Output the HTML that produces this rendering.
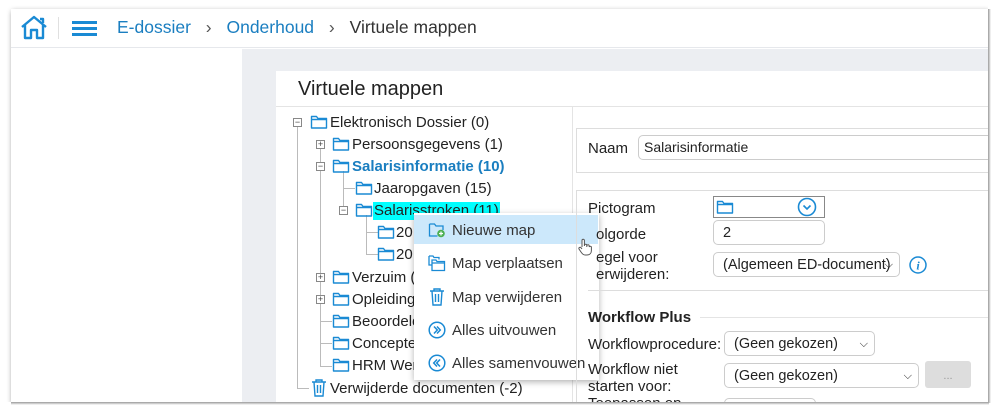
<!DOCTYPE html>
<html><head><meta charset="utf-8"><style>
*{box-sizing:border-box;margin:0;padding:0}
body{width:999px;height:413px;background:#fff;position:relative;overflow:hidden;font-family:"Liberation Sans",sans-serif;color:#222}
.abs{position:absolute}
.win{left:11px;top:9px;width:977px;height:393px;background:#fff;box-shadow:1px 2px 5px rgba(0,0,0,.45);overflow:hidden}
.t{position:absolute;white-space:nowrap;font-size:15px;line-height:18px;margin-top:1px}
.f{position:absolute;width:18px;height:15px}
.tog{position:absolute;width:9px;height:9px;border:1px solid #888;background:#fff;font-size:9px;line-height:7px;text-align:center;color:#444}
.vl{position:absolute;border-left:1px solid #bbb}
.hl{position:absolute;border-top:1px solid #bbb}
.mi{position:absolute;left:452px;font-size:15px;color:#333;white-space:nowrap;margin-top:1px}
.sel{position:absolute;border:1px solid #ccc;border-radius:5px;background:#fff;font-size:14.5px;padding-left:9px;line-height:24px;color:#222}
.lab{position:absolute;font-size:15px;white-space:nowrap;color:#222;margin-top:1px}
</style></head><body>
<svg width="0" height="0" style="position:absolute"><defs>
<symbol id="fo" viewBox="0 0 18 15"><path d="M1.5 2.5h5l1.5 2h8.5v9.5h-15z M1.5 5.5h15" fill="none" stroke="#1a8ad4" stroke-width="1.4" stroke-linejoin="round"/></symbol>
</defs></svg>
<div class="abs win">
 <div class="abs" style="left:0;top:0;width:977px;height:39px;border-bottom:1px solid #e6e8ec"></div>
 <svg class="abs" style="left:9px;top:5px" width="28" height="28" viewBox="0 0 28 28"><path d="M2 13L14 3l12 10 M5 11v13h6v-8h6v8h6V11 M20 5h3v4" fill="none" stroke="#1a8ad4" stroke-width="2.4" stroke-linejoin="round"/></svg>
 <div class="abs" style="left:47px;top:8px;height:22px;border-left:1px solid #e0e0e0"></div>
 <div class="abs" style="left:61px;top:12px;width:25px;height:3px;background:#1a8ad4;box-shadow:0 6px 0 #1a8ad4,0 12px 0 #1a8ad4"></div>
 <div class="abs" style="left:106px;top:8px;font-size:17.5px;white-space:nowrap;color:#1a7ec0">E-dossier <span style="color:#555;margin:0 10px">›</span> Onderhoud <span style="color:#555;margin:0 10px">›</span> <span style="color:#333">Virtuele mappen</span></div>
 <div class="abs" style="left:231px;top:40px;width:746px;height:353px;background:#eceef2"></div>
 <div class="abs" style="left:265px;top:62px;width:712px;height:331px;background:#fff"></div>
 <div class="abs" style="left:287px;top:69px;font-size:20px;color:#222">Virtuele mappen</div>
 <div class="abs" style="left:265px;top:97px;width:712px;border-top:1px solid #e4e4e4"></div>
 <div class="abs" style="left:561px;top:98px;height:295px;border-left:1px solid #e4e4e4"></div>
</div>
<div class="vl" style="left:297px;top:127px;height:261px"></div>
<div class="hl" style="left:297px;top:388px;width:12px"></div>
<div class="vl" style="left:320px;top:149px;height:217px"></div>
<div class="hl" style="left:320px;top:343px;width:12px"></div>
<div class="hl" style="left:320px;top:321px;width:12px"></div>
<div class="hl" style="left:320px;top:366px;width:12px"></div>
<div class="vl" style="left:343px;top:171px;height:40px"></div>
<div class="hl" style="left:343px;top:188px;width:12px"></div>
<div class="vl" style="left:366px;top:215px;height:40px"></div>
<div class="hl" style="left:366px;top:232px;width:12px"></div>
<div class="hl" style="left:366px;top:254px;width:12px"></div>

<div class="tog" style="left:293px;top:118px">−</div>
<svg class="f" style="left:310px;top:114px"><use href="#fo"/></svg>
<div class="t" style="left:330px;top:113px">Elektronisch Dossier (0)</div>
<div class="tog" style="left:316px;top:140px">+</div>
<svg class="f" style="left:332px;top:136px"><use href="#fo"/></svg>
<div class="t" style="left:352px;top:135px">Persoonsgegevens (1)</div>
<div class="tog" style="left:316px;top:162px">−</div>
<svg class="f" style="left:332px;top:158px"><use href="#fo"/></svg>
<div class="t" style="left:352px;top:157px;font-weight:bold;color:#1a7ec0">Salarisinformatie (10)</div>
<svg class="f" style="left:355px;top:180px"><use href="#fo"/></svg>
<div class="t" style="left:374px;top:179px">Jaaropgaven (15)</div>
<div class="tog" style="left:339px;top:206px">−</div>
<svg class="f" style="left:355px;top:202px"><use href="#fo"/></svg>
<div class="t" style="left:373px;top:201px;background:#00ffff;padding:0 1px">Salarisstroken (11)</div>
<svg class="f" style="left:377px;top:224px"><use href="#fo"/></svg>
<div class="t" style="left:396px;top:223px">20</div>
<svg class="f" style="left:377px;top:246px"><use href="#fo"/></svg>
<div class="t" style="left:396px;top:245px">20</div>
<div class="tog" style="left:316px;top:273px">+</div>
<svg class="f" style="left:332px;top:269px"><use href="#fo"/></svg>
<div class="t" style="left:352px;top:268px">Verzuim (</div>
<div class="tog" style="left:316px;top:295px">+</div>
<svg class="f" style="left:332px;top:291px"><use href="#fo"/></svg>
<div class="t" style="left:352px;top:290px">Opleiding</div>
<svg class="f" style="left:332px;top:313px"><use href="#fo"/></svg>
<div class="t" style="left:352px;top:312px">Beoordele</div>
<svg class="f" style="left:332px;top:335px"><use href="#fo"/></svg>
<div class="t" style="left:352px;top:334px">Concepte</div>
<svg class="f" style="left:332px;top:357px"><use href="#fo"/></svg>
<div class="t" style="left:352px;top:356px">HRM Wer</div>
<svg class="abs" style="left:311px;top:379px" width="16" height="18" viewBox="0 0 16 18"><path d="M1 3h14M5 3V1h6v2M3 3l1 14h8l1-14M6.5 6v8M9.5 6v8" fill="none" stroke="#1a8ad4" stroke-width="1.4"/></svg>
<div class="t" style="left:330px;top:379px">Verwijderde documenten (-2)</div>

<div class="abs" style="left:414px;top:213px;width:185px;height:167px;background:#fff;box-shadow:0 2px 6px rgba(0,0,0,.3)"></div>
<div class="abs" style="left:414px;top:215px;width:184px;height:29px;background:#cce8fb"></div>
<svg class="abs" style="left:428px;top:222px" width="18" height="16" viewBox="0 0 18 16"><path d="M1.5 2h5l1.5 2h7v4 M1.5 2v12h8" fill="none" stroke="#1a8ad4" stroke-width="1.3"/><circle cx="13" cy="11.5" r="3.8" fill="#4caf50"/><path d="M13 9.5v4M11 11.5h4" stroke="#fff" stroke-width="1.2"/></svg>
<div class="mi" style="top:221px">Nieuwe map</div>
<svg class="abs" style="left:428px;top:254px" width="18" height="18" viewBox="0 0 18 18"><path d="M1 2h4l1 1.5h5v2 M1 2v9h3 M4 6h4l1 1.5h7.5v9h-12.5z M4 9h12.5" fill="none" stroke="#1a8ad4" stroke-width="1.3"/></svg>
<div class="mi" style="top:254px">Map verplaatsen</div>
<svg class="abs" style="left:429px;top:288px" width="16" height="18" viewBox="0 0 16 18"><path d="M1 3h14M5 3V1h6v2M3 3l1 14h8l1-14M6.5 6v8M9.5 6v8" fill="none" stroke="#1a8ad4" stroke-width="1.4"/></svg>
<div class="mi" style="top:288px">Map verwijderen</div>
<svg class="abs" style="left:428px;top:321px" width="18" height="18" viewBox="0 0 18 18"><circle cx="9" cy="9" r="7.8" fill="none" stroke="#1a8ad4" stroke-width="1.5"/><path d="M6 5.5l3.3 3.5L6 12.5M9 5.5l3.3 3.5L9 12.5" fill="none" stroke="#1a8ad4" stroke-width="1.5"/></svg>
<div class="mi" style="top:321px">Alles uitvouwen</div>
<svg class="abs" style="left:428px;top:354px" width="18" height="18" viewBox="0 0 18 18"><circle cx="9" cy="9" r="7.8" fill="none" stroke="#1a8ad4" stroke-width="1.5"/><path d="M12 5.5L8.7 9l3.3 3.5M9 5.5L5.7 9 9 12.5" fill="none" stroke="#1a8ad4" stroke-width="1.5"/></svg>
<div class="mi" style="top:354px">Alles samenvouwen</div>
<svg class="abs" style="left:578px;top:238px" width="14" height="18" viewBox="0 0 14 18"><path d="M4 9V2.5a1.2 1.2 0 0 1 2.4 0V8 M6.4 7.5a1.2 1.2 0 0 1 2.4 0V9 M8.8 8a1.2 1.2 0 0 1 2.4 0v1 M11.2 9a1.2 1.2 0 0 1 2.2 0v3.5c0 2.5-1.5 4.5-4.5 4.5H7c-2 0-3-1.5-4-3L1 11a1.2 1.2 0 0 1 2-1.3L4 11" fill="#fff" stroke="#555" stroke-width="1"/></svg>

<div class="abs" style="left:576px;top:128px;width:420px;height:45px;border:1px solid #ddd"></div>
<div class="lab" style="left:588px;top:139px">Naam</div>
<div class="sel" style="left:638px;top:135px;width:360px;height:25px;padding-left:5px;font-size:14px;line-height:23px">Salarisinformatie</div>
<div class="abs" style="left:576px;top:190px;width:420px;height:220px;border-left:1px solid #ddd;border-top:1px solid #ddd"></div>
<div class="lab" style="left:588px;top:199px">Pictogram</div>
<div class="abs" style="left:713px;top:196px;width:112px;height:22px;border:1px solid #888"></div>
<svg class="f" style="left:716px;top:199px"><use href="#fo"/></svg>
<svg class="abs" style="left:797px;top:197px" width="20" height="20" viewBox="0 0 20 20"><circle cx="10" cy="10" r="8.5" fill="none" stroke="#1a8ad4" stroke-width="1.6"/><path d="M6.5 8.5L10 12l3.5-3.5" fill="none" stroke="#1a8ad4" stroke-width="1.6"/></svg>
<div class="lab" style="left:596px;top:225px">olgorde</div>
<div class="sel" style="left:713px;top:220px;width:112px;height:25px">2</div>
<div class="lab" style="left:596px;top:248px;line-height:17px">egel voor<br>erwijderen:</div>
<div class="sel" style="left:713px;top:252px;width:187px;height:25px">(Algemeen ED-document) <span style="position:absolute;right:6px;font-size:11px">⌵</span></div>
<svg class="abs" style="left:909px;top:256px" width="18" height="18" viewBox="0 0 18 18"><circle cx="9" cy="9" r="8" fill="none" stroke="#1a8ad4" stroke-width="1.5"/><text x="9" y="13.5" text-anchor="middle" font-family="Liberation Serif" font-style="italic" font-weight="bold" font-size="12" fill="#1a8ad4">i</text></svg>
<div class="abs" style="left:588px;top:290px;width:410px;border-top:1px solid #ddd"></div>
<div class="lab" style="left:588px;top:308px;font-weight:bold">Workflow Plus</div>
<div class="abs" style="left:700px;top:317px;width:298px;border-top:1px solid #e4e4e4"></div>
<div class="lab" style="left:588px;top:335px">Workflowprocedure:</div>
<div class="sel" style="left:724px;top:331px;width:151px;height:25px">(Geen gekozen) <span style="position:absolute;right:6px;font-size:11px">⌵</span></div>
<div class="lab" style="left:588px;top:360px;line-height:17px">Workflow niet<br>starten voor:</div>
<div class="sel" style="left:724px;top:363px;width:195px;height:25px">(Geen gekozen) <span style="position:absolute;right:6px;font-size:11px">⌵</span></div>
<div class="abs" style="left:925px;top:361px;width:46px;height:27px;background:#ddd;border-radius:3px;color:#999;font-size:11px;text-align:center;line-height:30px">...</div>
<div class="abs" style="left:724px;top:398px;width:92px;height:10px;border:1px solid #ccc;border-radius:5px"></div>
<div class="lab" style="left:588px;top:396px;line-height:14px;overflow:hidden;height:6px">Toepassen op</div>
<div class="abs" style="left:0;top:402px;width:999px;height:11px;background:#fff"></div>
<div class="abs" style="left:988px;top:0;width:11px;height:413px;background:#fff"></div>
<div class="abs" style="left:988px;top:9px;width:3px;height:394px;background:linear-gradient(90deg,#999,#fff)"></div>
<div class="abs" style="left:11px;top:402px;width:978px;height:3px;background:linear-gradient(#999,#fff)"></div>
</body></html>
